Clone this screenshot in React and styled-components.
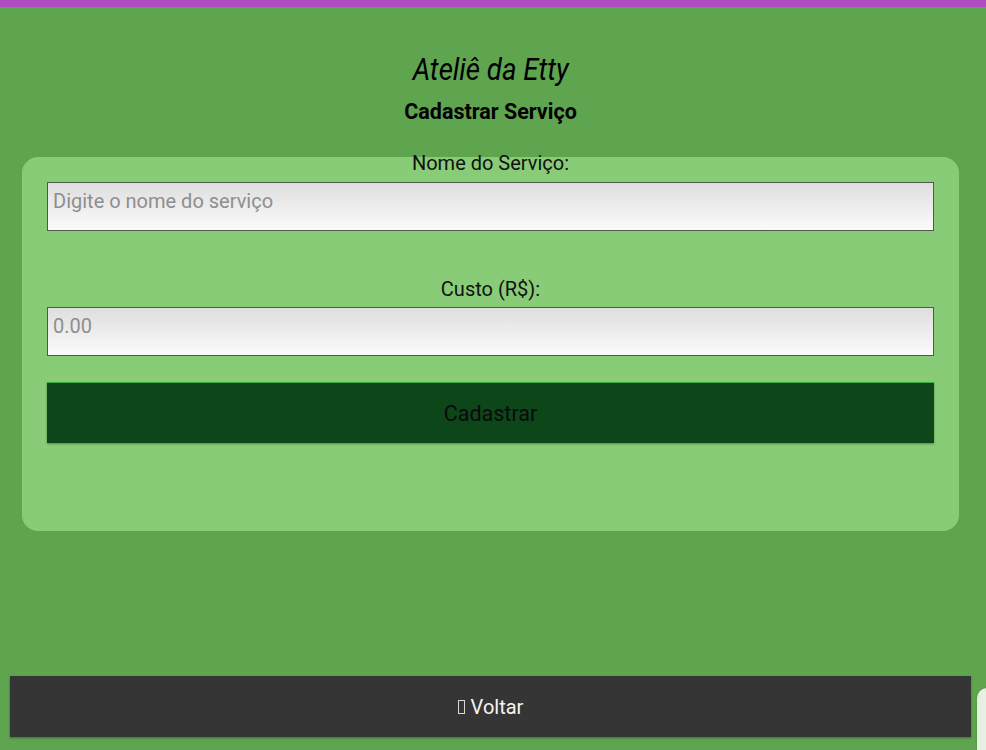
import React from "react";
import styled, { createGlobalStyle } from "styled-components";

const Global = createGlobalStyle`
  html, body { margin: 0; padding: 0; background: #5fa44f; }
  body { font-family: Roboto, "Noto Sans", "Liberation Sans", sans-serif; overflow: hidden; }
`;

const TopBar = styled.div`
  height: 7px;
  width: 986px;
  background: #b04cc1;
  flex: none;
`;

const Page = styled.div`
  width: 981px;
  height: 743px;
  display: flex;
  flex-direction: column;
`;

const Header = styled.header`
  display: flex;
  flex-direction: column;
  align-items: center;
  padding-top: 46px;
`;

const Title = styled.h1`
  margin: 0;
  font-family: Roboto, sans-serif;
  font-style: italic;
  font-weight: 400;
  font-size: 31px;
  line-height: 34px;
  color: #000;
  transform: scaleX(0.89);
`;

const Subtitle = styled.h2`
  margin: 13px 0 0;
  font-size: 21.5px;
  line-height: 24px;
  font-weight: 700;
  color: #000;
`;

const Card = styled.form`
  margin: 33px 0 0 22px;
  width: 937px;
  box-sizing: border-box;
  background: #88cc77;
  border-radius: 16px;
  padding: 0 25px 88px;
  display: flex;
  flex-direction: column;
`;

const Label = styled.label`
  display: block;
  text-align: center;
  font-size: 20px;
  line-height: 23px;
  color: #111;
  margin: ${(p) => p.$top}px 0 ${(p) => p.$bottom}px;
`;

const Input = styled.input`
  display: block;
  width: 100%;
  box-sizing: border-box;
  height: 49px;
  border: 1px solid #4f5a4c;
  background: linear-gradient(#dedede, #fbfbfb);
  font-family: Roboto, sans-serif;
  font-size: 20px;
  line-height: 23px;
  padding: 6px 5px 18px;
  outline: none;
  color: #222;
  &::placeholder { color: #8e8e8e; }
`;

const SubmitButton = styled.button`
  margin-top: 26px;
  height: 61px;
  width: 100%;
  background: #0d4619;
  border: none;
  border-top: 1px solid #3fae4a;
  box-shadow: 0 1px 2px rgba(0, 0, 0, 0.35);
  font-family: Roboto, sans-serif;
  font-size: 21.5px;
  color: #0a0a0a;
  cursor: pointer;
`;

const Footer = styled.div`
  margin-top: auto;
  margin-bottom: 13px;
  padding: 0 0 0 10px;
`;

const BackButton = styled.button`
  width: 961px;
  height: 61px;
  background: #353535;
  border: none;
  box-shadow: 0 1px 2px rgba(0, 0, 0, 0.35);
  color: #f4f4f4;
  font-family: Roboto, sans-serif;
  font-size: 20px;
  display: flex;
  align-items: center;
  justify-content: center;
  gap: 6px;
  cursor: pointer;
`;

const Tofu = styled.span`
  display: inline-block;
  width: 5px;
  height: 12px;
  border: 1px solid #d8d8d8;
  margin-top: 1px;
`;

const Widget = styled.div`
  position: fixed;
  left: 977px;
  top: 688px;
  width: 40px;
  height: 80px;
  border-radius: 10px 0 0 0;
  background: linear-gradient(90deg, #e2f0df, #f4f9f2);
  box-shadow: 0 0 2px rgba(0, 0, 0, 0.2);
`;

export default function App() {
  return (
    <>
      <Global />
      <TopBar />
      <Page>
        <Header>
          <Title>Ateliê da Etty</Title>
          <Subtitle>Cadastrar Serviço</Subtitle>
        </Header>
        <Card onSubmit={(e) => e.preventDefault()}>
          <Label $top={-5} $bottom={7} htmlFor="nome">Nome do Serviço:</Label>
          <Input id="nome" type="text" placeholder="Digite o nome do serviço" />
          <Label $top={47} $bottom={6} htmlFor="custo">Custo (R$):</Label>
          <Input id="custo" type="text" placeholder="0.00" />
          <SubmitButton type="submit">Cadastrar</SubmitButton>
        </Card>
        <Footer>
          <BackButton type="button">
            <Tofu />
            Voltar
          </BackButton>
        </Footer>
      </Page>
      <Widget />
    </>
  );
}
